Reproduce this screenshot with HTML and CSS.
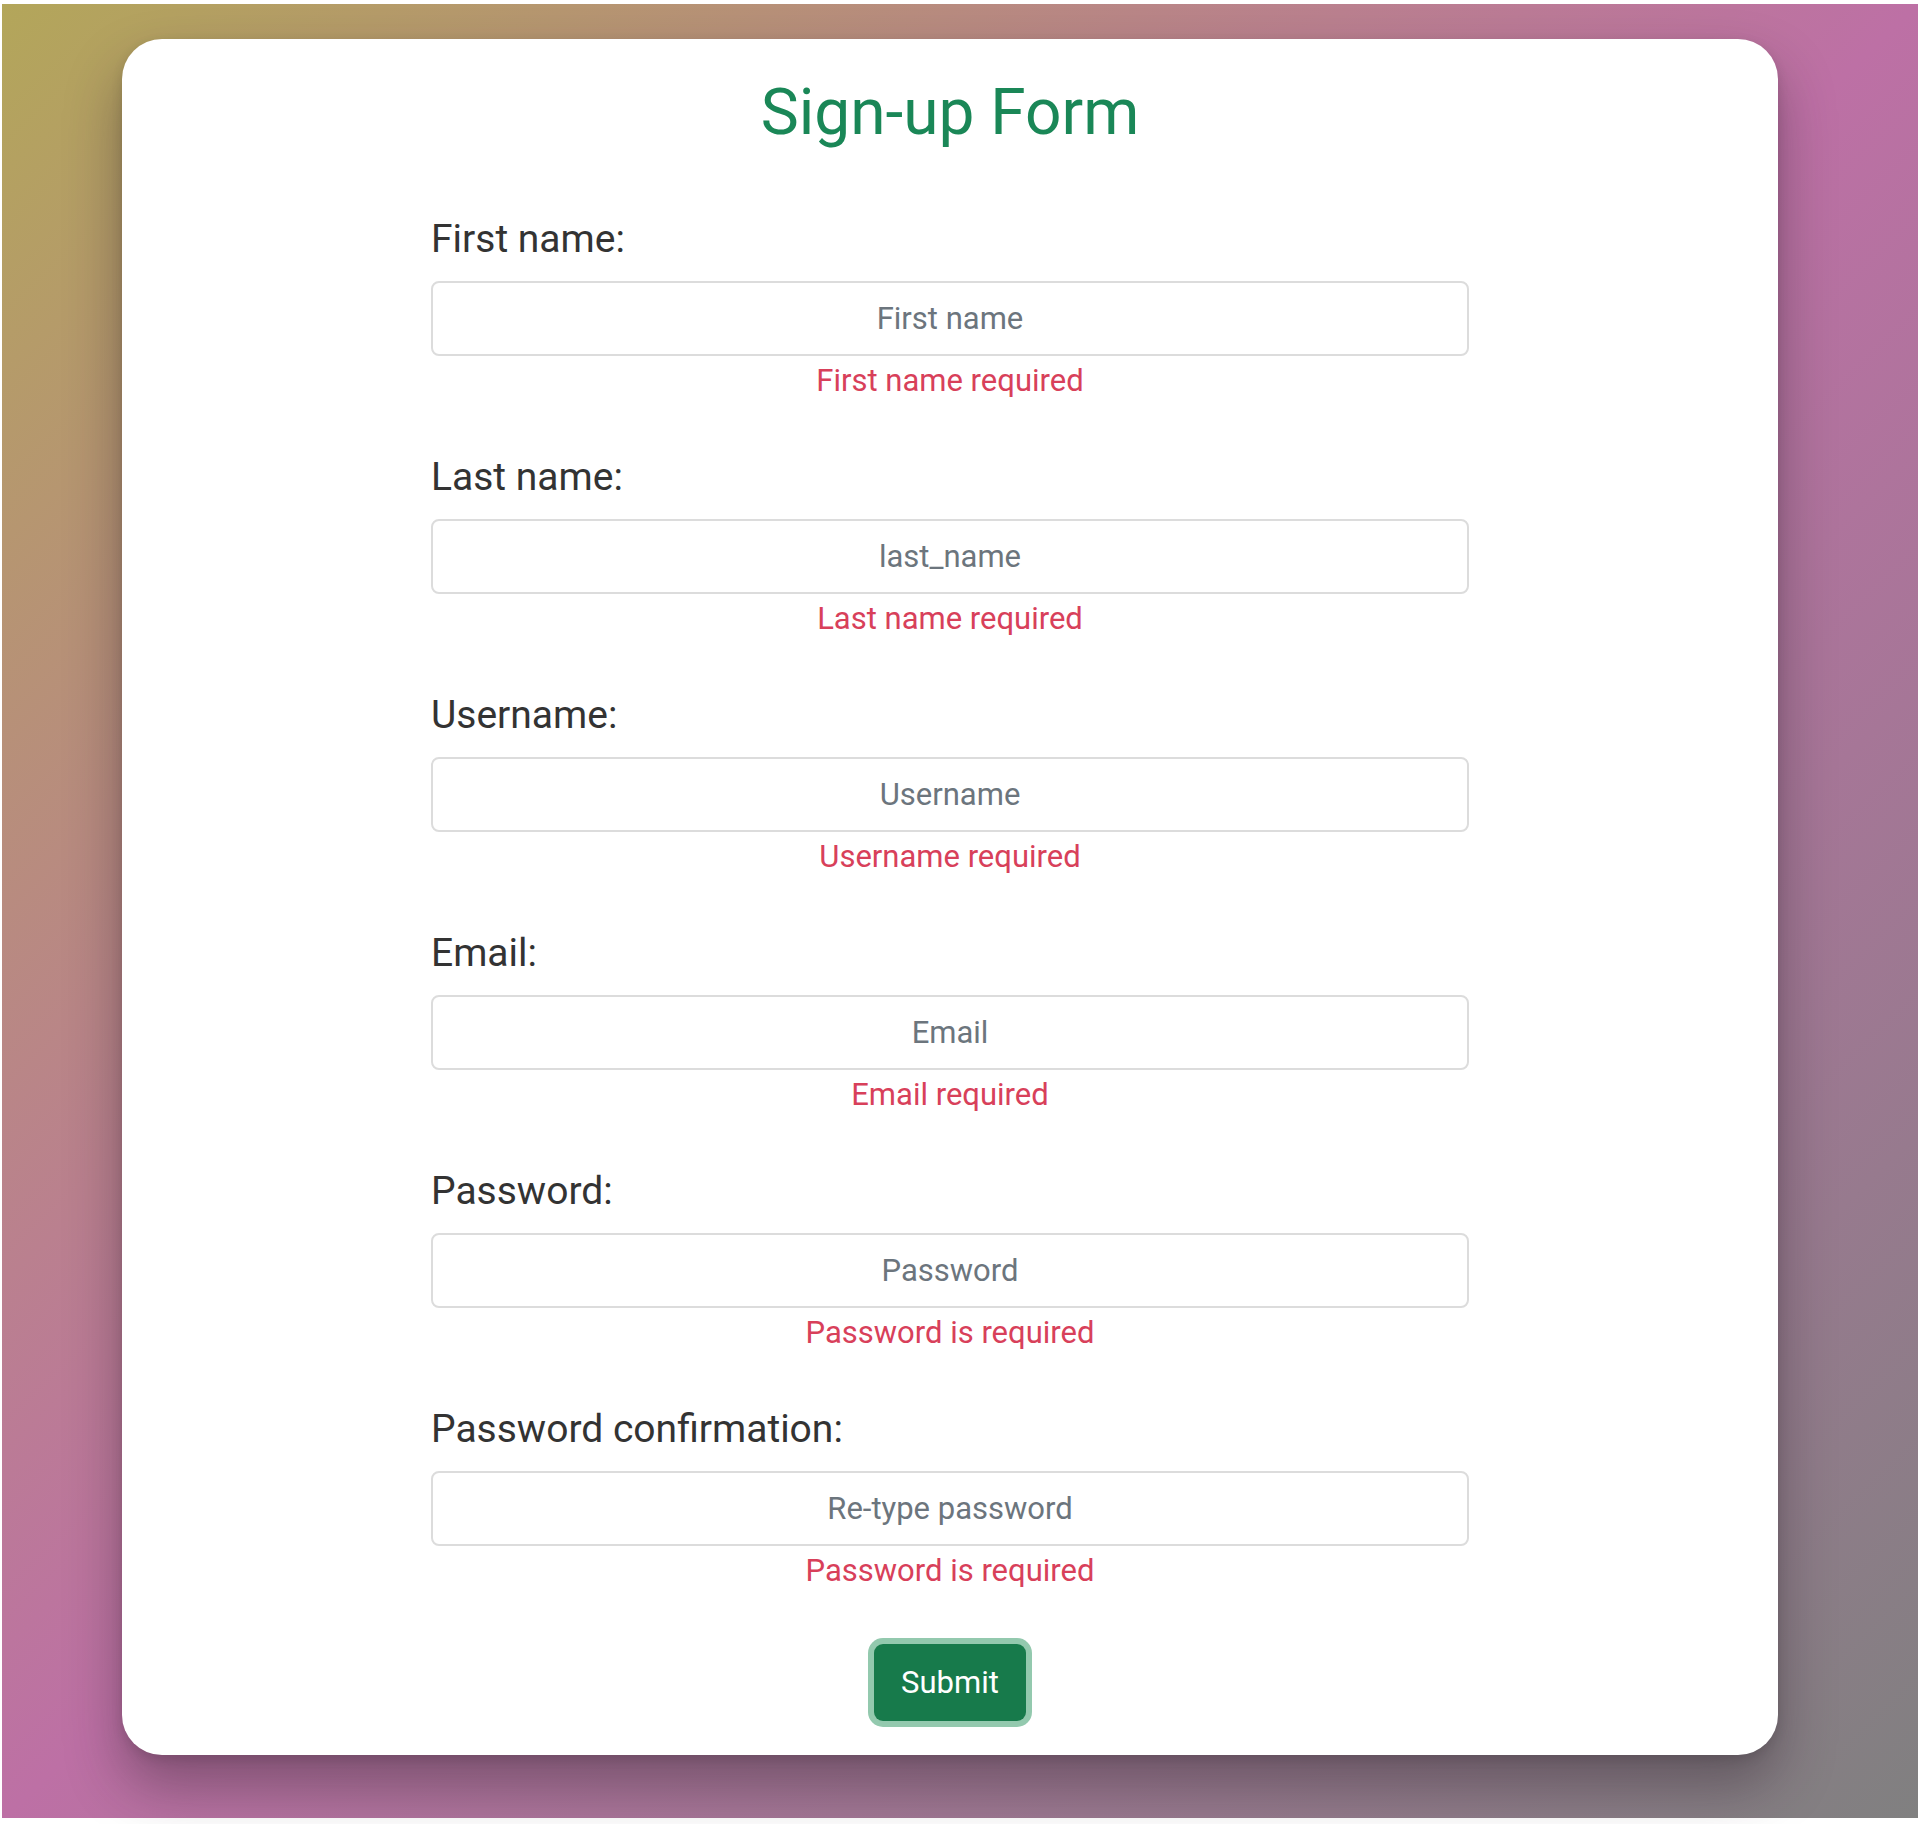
FILE: index.html
```html
<!DOCTYPE html>
<html lang="en">
<head>
<meta charset="utf-8">
<title>Sign-up Form</title>
<link rel="stylesheet" href="styles.css">
</head>
<body>
<div class="backdrop">
  <main class="card">
    <h1 class="title">Sign-up Form</h1>
    <form class="form" novalidate>
      <div class="group">
        <label class="label" for="first">First name:</label>
        <input class="field" id="first" type="text" placeholder="First name">
        <div class="error">First name required</div>
      </div>
      <div class="group">
        <label class="label" for="last">Last name:</label>
        <input class="field" id="last" type="text" placeholder="last_name">
        <div class="error">Last name required</div>
      </div>
      <div class="group">
        <label class="label" for="user">Username:</label>
        <input class="field" id="user" type="text" placeholder="Username">
        <div class="error">Username required</div>
      </div>
      <div class="group">
        <label class="label" for="email">Email:</label>
        <input class="field" id="email" type="email" placeholder="Email">
        <div class="error">Email required</div>
      </div>
      <div class="group">
        <label class="label" for="pw">Password:</label>
        <input class="field" id="pw" type="password" placeholder="Password">
        <div class="error">Password is required</div>
      </div>
      <div class="group">
        <label class="label" for="pw2">Password confirmation:</label>
        <input class="field" id="pw2" type="password" placeholder="Re-type password">
        <div class="error">Password is required</div>
      </div>
      <div class="actions">
        <button class="submit" type="button">Submit</button>
      </div>
    </form>
  </main>
</div>
</body>
</html>
```
FILE: styles.css
```css
* { box-sizing: border-box; }

html, body {
  margin: 0;
  background: #ffffff;
}

body {
  padding: 4px 3px 6px 2px;
  font-family: Roboto, "Open Sans", sans-serif;
}

.backdrop {
  height: 1814px;
  background: linear-gradient(to bottom right, #b3a65a 0%, #bd70a5 50%, #808080 100%);
  padding-top: 35px;
  padding-left: 120px;
}

.card {
  width: 1656px;
  background: #ffffff;
  border-radius: 40px;
  padding: 36px 0 34px;
  box-shadow: 0 30px 55px rgba(40, 30, 40, 0.4), 0 4px 12px rgba(0, 0, 0, 0.12);
}

.title {
  margin: 0 0 64px;
  text-align: center;
  font-weight: 400;
  font-size: 64px;
  line-height: 76px;
  color: #1a8757;
}

.form {
  width: 1038px;
  margin: 0 auto;
  display: flex;
  flex-direction: column;
  gap: 52px;
}

.group {
  display: flex;
  flex-direction: column;
}

.label {
  font-size: 39px;
  line-height: 48px;
  color: #333333;
  margin-bottom: 18px;
}

.field {
  height: 75px;
  width: 100%;
  border: 2px solid #dcdcdc;
  border-radius: 8px;
  background: #ffffff;
  font-family: Roboto, "Open Sans", sans-serif;
  font-size: 31px;
  text-align: center;
  color: #333333;
  outline: none;
}

.field::placeholder {
  color: #6c757d;
  opacity: 1;
}

.error {
  margin-top: 5px;
  font-size: 31px;
  line-height: 40px;
  text-align: center;
  color: #d8405a;
}

.actions {
  display: flex;
  justify-content: center;
  margin-top: 1px;
}

.submit {
  width: 152px;
  height: 77px;
  border: none;
  border-radius: 9px;
  background: #177a4b;
  color: #ffffff;
  font-family: Roboto, "Open Sans", sans-serif;
  font-size: 31px;
  box-shadow: 0 0 0 6px #93c9ae;
  cursor: pointer;
}
```
